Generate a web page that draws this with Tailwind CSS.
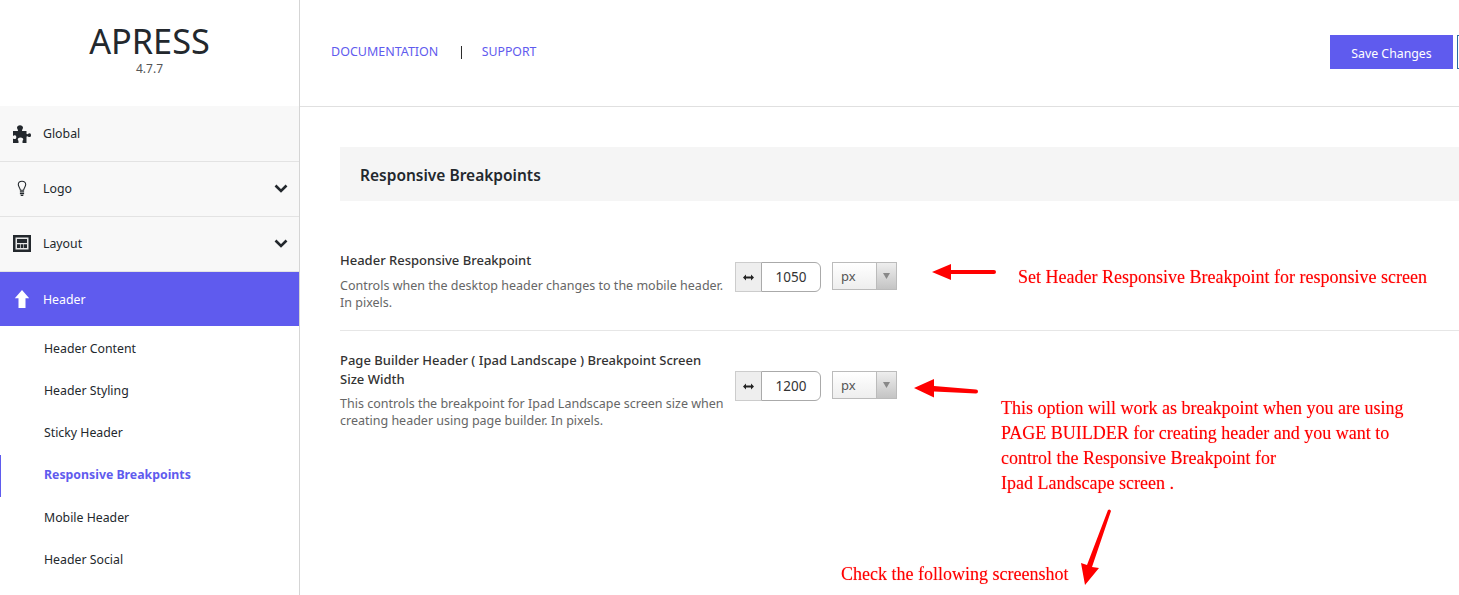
<!DOCTYPE html>
<html lang="en">
<head>
    <meta charset="UTF-8">
    <title>Apress Options</title>
    <script src="https://cdn.jsdelivr.net/npm/@tailwindcss/browser@4"></script>
</head>
<body class="bg-white overflow-hidden font-['Noto_Sans',sans-serif] text-[12.300px] text-[#23282d]">
<div class="relative flex w-[1459px] h-[595px] overflow-hidden">

    <!-- sidebar -->
    <aside class="w-[300px] shrink-0 border-r border-[#d5d5d5] h-full">
        <div class="h-[106px] pt-[21px] flex flex-col items-center">
            <div class="text-[34.300px] leading-[40px] text-[#23282d]">APRESS</div>
            <div class="mt-[2px] text-[12px] leading-[12px] text-[#555]">4.7.7</div>
        </div>

        <a class="flex items-center h-[56px] bg-[#f8f8f8] border-b border-[#e3e3e3] pl-[13px] pr-[12px]">
            <svg class="w-[18px] h-[18px] mr-[12px]" viewBox="0 0 18 18"><path fill="#23282d" d="M0 6h4.200c.8 0 1-.6.6-1.300C4.200 3.800 4 3.300 4 2.600 4 1.200 5.300.2 7 .2s3 1 3 2.400c0 .7-.2 1.200-.8 2.100-.4.7-.2 1.300.6 1.300H13.500v2.400c0 .8.600 1 1.300.6.800-.5 1.300-.7 1.800-.7 1 0 1.400 .9 1.400 1.900s-.4 1.900-1.400 1.900c-.5 0-1-.2-1.800-.7-.7-.4-1.300-.2-1.300.6V18H9.500v-1.800c0-.8.500-1 .7-1.500.4-1-.8-2.200-2.700-2.200s-3.100 1.200-2.700 2.200c.2.500.7.700.7 1.500V18H0v-4.500c1.500 1 3.300.6 3.300-1.300S1.500 9.900 0 10.900z"/></svg>
            <span class="pt-[2px]">Global</span>
        </a>
        <a class="flex items-center justify-between h-[55px] bg-[#f8f8f8] border-b border-[#e3e3e3] pl-[13px] pr-[11px]">
            <span class="flex items-center">
                <svg class="w-[18px] h-[18px] mr-[12px]" viewBox="0 0 18 18"><path fill="none" stroke="#23282d" stroke-width="1.100" d="M9 1.200c-2.200 0-3.700 1.500-3.700 3.400 0 2 1.700 3 2.100 5.600h3.200c.4-2.600 2.100-3.600 2.100-5.600 0-1.900-1.500-3.400-3.700-3.400z"/><path stroke="#23282d" stroke-width="1.200" d="M6.900 11.800h4.200M6.900 13.600h4.200M7.700 15.300h2.600"/></svg>
                <span>Logo</span>
            </span>
            <svg class="w-[14px] h-[10px]" viewBox="0 0 14 10"><path fill="none" stroke="#23282d" stroke-width="2.600" d="M1.500 1.500l5.500 5.500L12.500 1.500"/></svg>
        </a>
        <a class="flex items-center justify-between h-[55px] bg-[#f8f8f8] border-b border-[#e3e3e3] pl-[13px] pr-[11px]">
            <span class="flex items-center">
                <svg class="w-[18px] h-[18px] mr-[12px]" viewBox="0 0 18 18"><path fill="#23282d" d="M0 0h18v17H0z"/><path fill="#e8e8e8" d="M2.500 2.500h13v12h-13z"/><path fill="#23282d" d="M4 4h10v4H4zM4 9.300h3v3.700H4zM7.700 9.300h2.700v3.700H7.700zM11 9.300h3v3.700h-3z"/></svg>
                <span>Layout</span>
            </span>
            <svg class="w-[14px] h-[10px]" viewBox="0 0 14 10"><path fill="none" stroke="#23282d" stroke-width="2.600" d="M1.500 1.500l5.500 5.500L12.500 1.500"/></svg>
        </a>
        <a class="flex items-center h-[54px] bg-[#5f5bee] text-white pl-[13px] pr-[12px]">
            <svg class="w-[18px] h-[18px] mr-[12px]" viewBox="0 0 18 18"><path fill="#fff" d="M9 0l7.200 8.300h-3.700V18H5.500V8.300H1.800z"/></svg>
            <span class="pt-[2px]">Header</span>
        </a>

        <ul class="mt-[1px] pt-[1px]">
            <li class="h-[42.200px] flex items-center pl-[44px]">Header Content</li>
            <li class="h-[42.200px] flex items-center pl-[44px]">Header Styling</li>
            <li class="h-[42.200px] flex items-center pl-[44px]">Sticky Header</li>
            <li class="h-[42.200px] flex items-center pl-[43px] border-l border-[#5f5bee] font-bold text-[#5f5bee]">Responsive Breakpoints</li>
            <li class="h-[42.200px] flex items-center pl-[44px]">Mobile Header</li>
            <li class="h-[42.200px] flex items-center pl-[44px]">Header Social</li>
        </ul>
    </aside>

    <!-- main -->
    <main class="flex-1 min-w-0">
        <div class="h-[107px] border-b border-[#e0e0e0] flex items-start justify-between">
            <div class="flex items-center pl-[31px] pt-[43px] text-[12.500px] leading-[18px] text-[#5f5bee]">
                <a>DOCUMENTATION</a>
                <span class="ml-[19.500px] mr-[17px] text-[#111] will-change-transform">|</span>
                <a class="text-[12.300px]">SUPPORT</a>
            </div>
            <div class="flex pt-[35px] -mr-[42px]">
                <button class="w-[123px] h-[34px] bg-[#5f5bee] text-white text-[12.300px] pt-[5px]">Save Changes</button>
                <button class="w-[44px] h-[34px] ml-[4px] border border-[#2a6ca5] bg-white"></button>
            </div>
        </div>

        <div class="pl-[40px] pt-[40px]">
            <div class="h-[54px] pt-[3px] bg-[#f5f5f5] flex items-center pl-[20px] text-[15.500px] font-semibold text-[#23282d]">Responsive Breakpoints</div>

            <section class="flex pt-[49px] border-b border-[#e6e6e6] h-[130px]">
                <div class="w-[395px] shrink-0">
                    <h3 class="text-[13px] leading-[20px] font-medium text-[#333]">Header Responsive Breakpoint</h3>
                    <p class="mt-[7px] text-[12.500px] leading-[17px] text-[#666]">Controls when the desktop header changes to the mobile header.<br>In pixels.</p>
                </div>
                <div class="flex items-start pt-[12px]">
                    <span class="w-[26px] h-[30px] bg-[#eee] border border-[#ccc] border-r-0 flex items-center justify-center">
                        <svg class="w-[11px] h-[7px]" viewBox="0 0 11 7"><path fill="#222" d="M0 3.500L3 .5v2h5v-2l3 3-3 3v-2H3v2z"/></svg>
                    </span>
                    <span class="w-[60px] h-[30px] border border-[#aaa] rounded-r-[6px] flex items-center justify-center text-[#333] text-[13.500px]">1050</span>
                    <span class="ml-[11px] w-[65px] h-[28px] border border-[#bbb] flex bg-gradient-to-b from-white to-[#eee]">
                        <span class="flex-1 pl-[8px] leading-[26px] text-[13px] text-[#555]">px</span>
                        <span class="w-[20px] bg-gradient-to-b from-[#eee] to-[#c4c4c4] border-l border-[#bbb] flex items-center justify-center">
                            <svg class="w-[7px] h-[6px]" viewBox="0 0 7 6"><path fill="#888" d="M0 0h7L3.500 6z"/></svg>
                        </span>
                    </span>
                </div>
            </section>

            <section class="flex pt-[20px]">
                <div class="w-[395px] shrink-0">
                    <h3 class="text-[13px] leading-[19px] font-medium text-[#333] w-[385px]">Page Builder Header ( Ipad Landscape ) Breakpoint Screen Size Width</h3>
                    <p class="mt-[5.500px] text-[12.500px] leading-[17.500px] text-[#666]">This controls the breakpoint for Ipad Landscape screen size when<br>creating header using page builder. In pixels.</p>
                </div>
                <div class="flex items-start pt-[20px]">
                    <span class="w-[26px] h-[30px] bg-[#eee] border border-[#ccc] border-r-0 flex items-center justify-center">
                        <svg class="w-[11px] h-[7px]" viewBox="0 0 11 7"><path fill="#222" d="M0 3.500L3 .5v2h5v-2l3 3-3 3v-2H3v2z"/></svg>
                    </span>
                    <span class="w-[60px] h-[30px] border border-[#aaa] rounded-r-[6px] flex items-center justify-center text-[#333] text-[13.500px]">1200</span>
                    <span class="ml-[11px] w-[65px] h-[28px] border border-[#bbb] flex bg-gradient-to-b from-white to-[#eee]">
                        <span class="flex-1 pl-[8px] leading-[26px] text-[13px] text-[#555]">px</span>
                        <span class="w-[20px] bg-gradient-to-b from-[#eee] to-[#c4c4c4] border-l border-[#bbb] flex items-center justify-center">
                            <svg class="w-[7px] h-[6px]" viewBox="0 0 7 6"><path fill="#888" d="M0 0h7L3.500 6z"/></svg>
                        </span>
                    </span>
                </div>
            </section>
        </div>
    </main>

    <!-- red annotations drawn on top of the screenshot -->
    <svg class="absolute left-0 top-0 w-[1459px] h-[595px] pointer-events-none" viewBox="0 0 1459 595">
        <path fill="red" d="M932 272l19-8v6l43 0a2 2 0 0 1 0 4l-43 0v6z"/>
        <path fill="red" d="M914 388l20-9v7l42 3.500a2 2 0 0 1 0 4l-42-2v6z"/>
        <path fill="red" d="M1085 585l-4-22 6 2 21-55a2 2 0 0 1 3 1l-19 56 7 1z"/>
    </svg>
    <div class="absolute left-[1018px] top-[265px] text-[18px] leading-[25px] text-[#f00] font-['Liberation_Serif',serif] whitespace-nowrap [text-shadow:0_0_1px_rgba(255,0,0,0.4)]">Set Header Responsive Breakpoint for responsive screen</div>
    <div class="absolute left-[1001px] top-[396px] text-[18px] leading-[25px] text-[#f00] font-['Liberation_Serif',serif] whitespace-nowrap [text-shadow:0_0_1px_rgba(255,0,0,0.4)]">This option will work as breakpoint when you are using<br>PAGE BUILDER for creating header and you want to<br>control the Responsive Breakpoint for<br>Ipad Landscape screen .</div>
    <div class="absolute left-[841px] top-[562px] text-[18px] leading-[25px] text-[#f00] font-['Liberation_Serif',serif] whitespace-nowrap [text-shadow:0_0_1px_rgba(255,0,0,0.4)]">Check the following screenshot</div>
</div>
</body>
</html>
